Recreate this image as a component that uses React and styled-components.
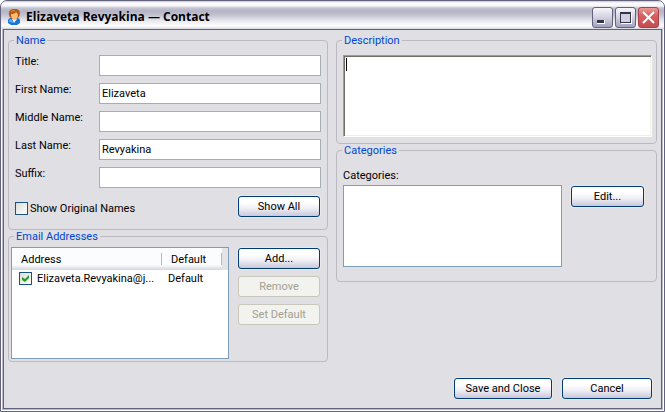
import React, { useState } from "react";
import styled, { createGlobalStyle, css } from "styled-components";

const Global = createGlobalStyle`
  *, *::before, *::after { box-sizing: border-box; }
  body { margin: 0; background: #fff; }
  body, button, input, textarea {
    font-family: Roboto, "DejaVu Sans Condensed", sans-serif;
    font-size: 11px;
    line-height: 13px;
    color: #000;
  }
`;

const Window = styled.div`
  display: flex;
  flex-direction: column;
  min-height: 100vh;
  padding: 0 2px 2px;
  border: 1px solid #62627f;
  border-radius: 7px 7px 0 0;
  background: #b9b9c9;
  box-shadow: inset 0 0 0 1px #fff;
`;

const TitleBar = styled.header`
  display: flex;
  align-items: center;
  gap: 3px;
  height: 28px;
  margin: 0 -2px;
  padding: 4px 5px 0 6px;
  border-radius: 6px 6px 0 0;
  background: linear-gradient(#c4c4d2 0, #fff 2px, #f4f4f8 5px, #c4c4d2 7px, #b3b3c6 10px, #c2c2d0 14px, #e9e9ef 20px, #fff 25px, #d5d5df 28px);
`;

const Title = styled.h1`
  flex: 1;
  margin: 0;
  font: bold 12px/18px "Open Sans", sans-serif;
  white-space: nowrap;
`;

const Captions = styled.div`
  display: flex;
  gap: 2px;
`;

const CaptionButton = styled.button`
  width: 21px;
  height: 21px;
  padding: 0;
  border: 1px solid ${(p) => (p.$close ? "#a8424a" : "#62627f")};
  border-radius: 3px;
  background: ${(p) =>
    p.$close
      ? "linear-gradient(#e89a96, #d9605f 40%, #c84a50)"
      : "linear-gradient(#f6f6fa, #d6d6e2 45%, #a2a2bc)"};
  svg { display: block; }
`;

const Client = styled.main`
  flex: 1;
  display: flex;
  flex-direction: column;
  padding: 4px 4px 9px;
  border: 1px solid #62627f;
  background: #e0dfe4;
`;

const Columns = styled.div`
  flex: 1;
  display: grid;
  grid-template-columns: 320fr 321fr;
  gap: 8px;
  align-items: start;
`;

const Column = styled.div`
  min-width: 0;
`;

const pads = {
  name: "8px 6px 12px",
  email: "4px 6px 2px 2px",
  description: "8px 4px 6px 6px",
  categories: "12px 12px 14px 6px",
};

const Group = styled.fieldset`
  min-width: 0;
  margin: 0;
  padding: ${(p) => pads[p.$kind]};
  border: 1px solid #bdb9c0;
  border-radius: 4px;
`;

const Legend = styled.legend`
  margin-left: ${(p) => p.$indent}px;
  padding: 0 2px;
  color: #0046d5;
`;

const Fields = styled.div`
  display: grid;
  gap: 7px;
`;

const Field = styled.div`
  display: grid;
  grid-template-columns: 84px 1fr;
`;

const TextInput = styled.input`
  width: 100%;
  height: 21px;
  padding: 0 2px;
  border: 1px solid #a5acb2;
  border-radius: 0;
  background: #fff;
  outline: none;
`;

const Options = styled.div`
  display: flex;
  align-items: center;
  justify-content: space-between;
  padding: 8px 1px 0 0;
`;

const CheckLabel = styled.label`
  display: flex;
  align-items: center;
  gap: 2px;
  padding-top: 4px;
`;

const Check = styled.input.attrs({ type: "checkbox" })`
  appearance: none;
  flex: none;
  width: 13px;
  height: 13px;
  margin: 0;
  border: 1px solid #1c5180;
  background: linear-gradient(135deg, #dcdcd7, #fff);
  &:checked::before {
    content: "";
    display: block;
    width: 7px;
    height: 7px;
    margin: 2px;
    background: #21a121;
    clip-path: polygon(0 29%, 43% 57%, 100% 0, 100% 43%, 43% 100%, 0 71%);
  }
`;

const Button = styled.button`
  width: ${(p) => p.$width}px;
  height: 21px;
  padding: 0;
  border: 1px solid #003c74;
  border-radius: 3px;
  background: linear-gradient(#fff 30%, #eeeef5 60%, #c9c7da);
  box-shadow: 0 0 0 1px #e9e8e6;
  ${(p) =>
    p.disabled &&
    css`
      border-color: #c9c7ba;
      background: #f2f2ee;
      box-shadow: none;
      color: #a1a192;
    `}
`;

const EmailBody = styled.div`
  display: flex;
  justify-content: space-between;
  gap: 9px;
`;

const ButtonStack = styled.div`
  display: grid;
  align-content: start;
  gap: 7px;
  padding: 1px 1px 0 0;
`;

const ListBox = styled.div`
  flex: 1;
  min-width: 0;
  height: ${(p) => p.$height}px;
  border: 1px solid #7f9db9;
  background: #fff;
`;

const Table = styled.table`
  width: 100%;
  table-layout: fixed;
  border-collapse: separate;
  border-spacing: 0;
  background: linear-gradient(#fbfcfe 17px, #d4d5df 22px) 0 0 / 100% 22px no-repeat;
`;

const HeadCell = styled.th`
  width: ${(p) => p.$width};
  height: 22px;
  padding: 0 0 0 9px;
  font-weight: normal;
  text-align: left;
  background: linear-gradient(#b9b9bd, #b9b9bd) right 5px / 1px 12px no-repeat;
`;

const EndCell = styled.th`
  width: 6px;
  padding: 0;
  background: #e4e4e6;
`;

const Cell = styled.td`
  padding: 2px 0 2px 6px;
  white-space: nowrap;
  &:first-child { padding-left: 7px; }
`;

const AddressLabel = styled.label`
  display: flex;
  align-items: center;
  gap: 5px;
`;

const TextFrame = styled.div`
  position: relative;
`;

const TextArea = styled.textarea`
  display: block;
  width: 100%;
  height: 82px;
  padding: 2px;
  border: 1px solid;
  border-color: #9d9d95 #fff #fff #9d9d95;
  border-radius: 0;
  box-shadow: inset 1px 1px 0 #716f64, inset -1px -1px 0 #f1efe2;
  background: #fff;
  resize: none;
  outline: none;
  caret-color: transparent;
`;

const Caret = styled.span`
  position: absolute;
  left: 3px;
  top: 3px;
  width: 1px;
  height: 13px;
  background: #000;
`;

const CategoryLabel = styled.div`
  padding-bottom: 3px;
`;

const CategoryBody = styled.div`
  display: flex;
  align-items: start;
  gap: 9px;
  button { margin-top: 1px; }
`;

const Footer = styled.footer`
  display: flex;
  justify-content: flex-end;
  gap: 10px;
  padding: 16px 5px 0 0;
`;

function PersonIcon() {
  return (
    <svg width="16" height="16" viewBox="0 0 16 16" aria-hidden="true">
      <path d="M1 14V12Q1 9 4 9H10Q13 9 13 12V14L10 16H4Z" fill="#1b74cf" />
      <path d="M2 13V12Q2 10 4 10L7 14Z" fill="#56adf0" />
      <path d="M5 10L7 14L10 10Z" fill="#e8f4ff" />
      <path d="M2 6Q1 1 6 0Q12 -1 13 4Q13 7 11 9H4Q2 8 2 6Z" fill="#b05a14" />
      <path d="M4 5Q8 5 9 3Q11 4 11 7Q10 11 7 11Q4 10 4 5Z" fill="#ffbc6c" />
      <path d="M4 3Q5 1 8 2" fill="none" stroke="#e8963c" />
    </svg>
  );
}

const names = [
  ["title", "Title:", ""],
  ["first", "First Name:", "Elizaveta"],
  ["middle", "Middle Name:", ""],
  ["last", "Last Name:", "Revyakina"],
  ["suffix", "Suffix:", ""],
];

export default function App() {
  const [original, setOriginal] = useState(false);
  return (
    <>
      <Global />
      <Window>
        <TitleBar>
          <PersonIcon />
          <Title>Elizaveta Revyakina — Contact</Title>
          <Captions>
            <CaptionButton aria-label="Minimize">
              <svg width="19" height="19"><path d="M4 12h8v4H4z" fill="#fff" /><path d="M4 12h7v3H4z" fill="#33334d" /></svg>
            </CaptionButton>
            <CaptionButton aria-label="Maximize">
              <svg width="19" height="19"><path d="M5 5h11v11H5z" fill="#fff" /><path fillRule="evenodd" d="M4 4h11v11H4zM5 6v8h9V6z" fill="#33334d" /><path d="M5 6h9v8H5z" fill="#d0d0de" /></svg>
            </CaptionButton>
            <CaptionButton $close aria-label="Close">
              <svg width="19" height="19"><path d="M4 4l11 11M15 4l-11 11" stroke="#fff" strokeWidth="2" /></svg>
            </CaptionButton>
          </Captions>
        </TitleBar>
        <Client>
          <Columns>
            <Column>
              <Group $kind="name">
                <Legend $indent={-1}>Name</Legend>
                <Fields>
                  {names.map(([id, label, value]) => (
                    <Field key={id}>
                      <label htmlFor={id}>{label}</label>
                      <TextInput id={id} defaultValue={value} />
                    </Field>
                  ))}
                </Fields>
                <Options>
                  <CheckLabel>
                    <Check checked={original} onChange={(e) => setOriginal(e.target.checked)} />
                    Show Original Names
                  </CheckLabel>
                  <Button $width={82}>Show All</Button>
                </Options>
              </Group>
              <Group $kind="email">
                <Legend $indent={3}>Email Addresses</Legend>
                <EmailBody>
                  <ListBox $height={112}>
                    <Table>
                      <thead>
                        <tr>
                          <HeadCell>Address</HeadCell>
                          <HeadCell $width="60px">Default</HeadCell>
                          <EndCell />
                        </tr>
                      </thead>
                      <tbody>
                        <tr>
                          <Cell>
                            <AddressLabel>
                              <Check defaultChecked />
                              Elizaveta.Revyakina@j...
                            </AddressLabel>
                          </Cell>
                          <Cell>Default</Cell>
                          <td />
                        </tr>
                      </tbody>
                    </Table>
                  </ListBox>
                  <ButtonStack>
                    <Button $width={82}>Add...</Button>
                    <Button $width={82} disabled>Remove</Button>
                    <Button $width={82} disabled>Set Default</Button>
                  </ButtonStack>
                </EmailBody>
              </Group>
            </Column>
            <Column>
              <Group $kind="description">
                <Legend $indent={-1}>Description</Legend>
                <TextFrame>
                  <TextArea aria-label="Description" />
                  <Caret />
                </TextFrame>
              </Group>
              <Group $kind="categories">
                <Legend $indent={-1}>Categories</Legend>
                <CategoryLabel id="categories">Categories:</CategoryLabel>
                <CategoryBody>
                  <ListBox $height={82} role="listbox" aria-labelledby="categories" />
                  <Button $width={73}>Edit...</Button>
                </CategoryBody>
              </Group>
            </Column>
          </Columns>
          <Footer>
            <Button $width={98}>Save and Close</Button>
            <Button $width={90}>Cancel</Button>
          </Footer>
        </Client>
      </Window>
    </>
  );
}
